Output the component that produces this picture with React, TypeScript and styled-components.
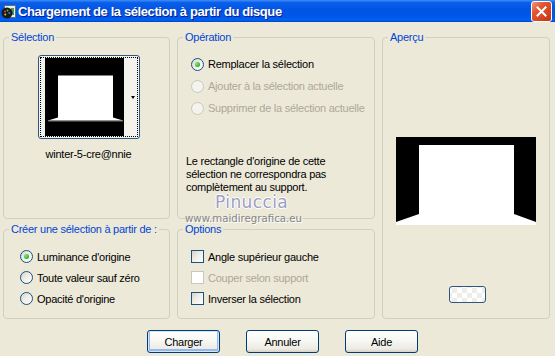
import styled, { createGlobalStyle } from 'styled-components';

const GlobalStyle = createGlobalStyle`
  html, body {
    margin: 0;
    padding: 0;
    background: #ECE9D8;
  }
`;

const Window = styled.div`
  position: relative;
  width: 555px;
  height: 356px;
  overflow: hidden;
  background: #ECE9D8;
  color: #000;
  font-family: "Liberation Sans", Arial, sans-serif;
  font-size: 11px;
  letter-spacing: -0.25px;
`;

const TitleBar = styled.div`
  height: 22px;
  display: flex;
  align-items: center;
  padding: 0 3px 0 1px;
  box-sizing: border-box;
  background: linear-gradient(to bottom, #3D8EF8 0%, #0A5EEA 12%, #0055E3 45%, #0058E8 80%, #0063F5 90%, #0046CB 100%);
`;

const TitleIcon = styled.svg`
  width: 16px;
  height: 16px;
  flex: none;
  margin-right: 1px;
`;

const TitleText = styled.div`
  color: #fff;
  font-weight: bold;
  font-size: 13px;
  letter-spacing: -0.4px;
  text-shadow: 1px 1px 0 #0A1E8C;
  white-space: nowrap;
`;

const CloseButton = styled.div`
  margin-left: auto;
  width: 21px;
  height: 21px;
  box-sizing: border-box;
  border: 1px solid #fff;
  border-radius: 3px;
  background: linear-gradient(135deg, #F0957A 0%, #E2552F 35%, #D2411F 75%, #BC3417 100%);
  display: flex;
  align-items: center;
  justify-content: center;
`;

const Content = styled.div`
  padding: 9px 0 0 3px;
`;

const Groups = styled.div`
  display: grid;
  grid-template-columns: 167px 198px 168px;
  grid-template-rows: 188px 96px;
  column-gap: 7px;
  row-gap: 4px;
`;

const Group = styled.fieldset<{ $col: string; $row: string }>`
  grid-column: ${p => p.$col};
  grid-row: ${p => p.$row};
  margin: 0;
  padding: 0;
  min-width: 0;
  min-inline-size: 0;
  box-sizing: border-box;
  height: 100%;
  border: 1px solid #D0D0BF;
  border-radius: 4px;
`;

const Legend = styled.legend`
  margin-left: 5px;
  padding: 0 2px;
  color: #0046D5;
  line-height: 13px;
  font-size: 11px;
`;

const GroupBody = styled.div<{ $pad: string; $center?: boolean }>`
  display: flex;
  flex-direction: column;
  align-items: ${p => (p.$center ? 'center' : 'flex-start')};
  padding: ${p => p.$pad};
`;

const Thumb = styled.div`
  width: 102px;
  height: 84px;
  box-sizing: border-box;
  border: 1px solid #2F5683;
  border-radius: 3px;
  padding: 1px;
  background: #F3F2EC;
`;

const Focus = styled.div`
  height: 100%;
  box-sizing: border-box;
  border: 1px dotted #000;
  display: flex;
  align-items: center;
  padding-left: 4px;
`;

const ArrowArea = styled.div`
  flex: 1;
  align-self: stretch;
  display: flex;
  align-items: center;
  justify-content: flex-end;
  padding-right: 2px;
`;

const Arrow = styled.span`
  width: 0;
  height: 0;
  border-left: 2.5px solid transparent;
  border-right: 2.5px solid transparent;
  border-top: 3px solid #000;
`;

const FileName = styled.div`
  margin-top: 9px;
  line-height: 13px;
`;

const OptionRow = styled.div<{ $h: number; $disabled?: boolean }>`
  display: flex;
  align-items: center;
  gap: 4px;
  height: ${p => p.$h}px;
  color: ${p => (p.$disabled ? '#ACA899' : '#000')};
  white-space: nowrap;
`;

const RadioMark = styled.span<{ $checked?: boolean; $disabled?: boolean }>`
  flex: none;
  width: 13px;
  height: 13px;
  box-sizing: border-box;
  border-radius: 50%;
  border: 1px solid ${p => (p.$disabled ? '#CAC8BB' : '#1C5180')};
  background: ${p =>
    p.$disabled ? '#F4F3EE' : 'linear-gradient(135deg, #D6D5CC 0%, #EEEDE6 45%, #FFFFFF 100%)'};
  display: flex;
  align-items: center;
  justify-content: center;

  &::after {
    content: '';
    display: ${p => (p.$checked ? 'block' : 'none')};
    width: 5px;
    height: 5px;
    border-radius: 50%;
    background: radial-gradient(circle at 35% 35%, #8CEB86 0%, #3FBE3B 50%, #1F9A1F 100%);
  }
`;

const CheckMark = styled.span<{ $disabled?: boolean }>`
  flex: none;
  width: 13px;
  height: 13px;
  box-sizing: border-box;
  border: 1px solid ${p => (p.$disabled ? '#CAC8BB' : '#1C5180')};
  background: ${p =>
    p.$disabled ? '#FFFFFF' : 'linear-gradient(135deg, #D6D5CC 0%, #EEEDE6 45%, #FFFFFF 100%)'};
`;

const Note = styled.p`
  margin: 36px 0 0 0;
  line-height: 13px;
`;

const Preview = styled.svg`
  width: 140px;
  height: 88px;
  display: block;
`;

const SwatchButton = styled.div`
  margin-top: 61px;
  margin-left: 3px;
  width: 37px;
  height: 17px;
  box-sizing: border-box;
  border: 1px solid #2F5683;
  border-radius: 3px;
  background-color: #FAFAF8;
  background-image: conic-gradient(#EDEDEA 25%, #FFFFFF 0 50%, #EDEDEA 0 75%, #FFFFFF 0);
  background-size: 10px 10px;
  background-position: 7px 1px;
`;

const ButtonRow = styled.div`
  display: flex;
  gap: 26px;
  margin-top: 11px;
  padding-left: 144px;
`;

const Button = styled.button<{ $default?: boolean }>`
  width: 73px;
  height: 23px;
  box-sizing: border-box;
  padding: 0;
  border: 1px solid #003C74;
  border-radius: 3px;
  background: linear-gradient(to bottom, #FFFFFF 0%, #F6F6F2 50%, #ECEBE4 85%, #D8D2C6 100%);
  color: #000;
  font: inherit;
  letter-spacing: inherit;
  box-shadow: ${p => (p.$default ? 'inset 0 0 0 1px #CEE7FF, inset 0 -1px 0 2px #98B8EA' : 'none')};
`;

const Watermark = styled.div`
  position: absolute;
  left: 185px;
  top: 194px;
  display: flex;
  flex-direction: column;
  align-items: flex-start;
  pointer-events: none;
  font-family: "DejaVu Sans", Verdana, sans-serif;
  letter-spacing: 0;
`;

const MarkName = styled.div`
  margin-left: 30px;
  font-size: 17px;
  line-height: 16px;
  letter-spacing: 0.4px;
  color: #9D9EC2;
  text-shadow: 1px 0 0 #fff, -1px 0 0 #fff, 0 1px 0 #fff, 0 -1px 0 #fff;
`;

const MarkSite = styled.div`
  margin-top: 4px;
  font-size: 10.2px;
  line-height: 9px;
  color: #858585;
  text-shadow: 1px 1px 0 #fff;
`;

export default function App() {
  return (
    <>
      <GlobalStyle />
      <Window>
        <TitleBar>
          <TitleIcon viewBox="0 0 16 16">
            <rect x="3.5" y="2.5" width="11" height="12" fill="#E6EEF6" stroke="#5A6E86" />
            <rect x="10" y="5" width="3" height="7" fill="#4E9A4A" />
            <circle cx="6" cy="10" r="5.5" fill="#1A1A1A" />
            <circle cx="4" cy="8.5" r="1" fill="#E23A3A" />
            <circle cx="6.5" cy="7.5" r="1" fill="#3AC24A" />
            <circle cx="8.3" cy="10" r="1" fill="#3A7AE2" />
            <circle cx="4.3" cy="11.5" r="1" fill="#E2C23A" />
          </TitleIcon>
          <TitleText>Chargement de la sélection à partir du disque</TitleText>
          <CloseButton>
            <svg width="11" height="11" viewBox="0 0 11 11">
              <path d="M1.5 1.5 L9.5 9.5 M9.5 1.5 L1.5 9.5" stroke="#fff" strokeWidth="2" strokeLinecap="square" />
            </svg>
          </CloseButton>
        </TitleBar>

        <Content>
          <Groups>
            <Group $col="1" $row="1">
              <Legend>Sélection</Legend>
              <GroupBody $pad="11px 0 0 4px" $center>
                <Thumb>
                  <Focus>
                    <svg width="79" height="78" viewBox="0 0 79 80" preserveAspectRatio="none">
                      <rect width="79" height="80" fill="#000" />
                      <polygon points="13,18 68,18 68,61 78,64 3,64 13,61" fill="#fff" />
                      <line x1="3" y1="64.5" x2="78" y2="64.5" stroke="#9A9A9A" strokeWidth="1" />
                    </svg>
                    <ArrowArea>
                      <Arrow />
                    </ArrowArea>
                  </Focus>
                </Thumb>
                <FileName>winter-5-cre@nnie</FileName>
              </GroupBody>
            </Group>

            <Group $col="2" $row="1">
              <Legend>Opération</Legend>
              <GroupBody $pad="9px 0 0 13px">
                <OptionRow $h={22}>
                  <RadioMark $checked />
                  Remplacer la sélection
                </OptionRow>
                <OptionRow $h={22} $disabled>
                  <RadioMark $disabled />
                  Ajouter à la sélection actuelle
                </OptionRow>
                <OptionRow $h={22} $disabled>
                  <RadioMark $disabled />
                  Supprimer de la sélection actuelle
                </OptionRow>
              </GroupBody>
              <GroupBody $pad="0 0 0 8px">
                <Note>
                  Le rectangle d'origine de cette
                  <br />
                  sélection ne correspondra pas
                  <br />
                  complètement au support.
                </Note>
              </GroupBody>
            </Group>

            <Group $col="3" $row="1 / span 2">
              <Legend>Aperçu</Legend>
              <GroupBody $pad="93px 0 0 0" $center>
                <Preview viewBox="0 0 140 88">
                  <rect width="140" height="88" fill="#000" />
                  <polygon points="23,8 118,8 118,77 140,85 140,88 0,88 0,85 23,77" fill="#fff" />
                </Preview>
                <SwatchButton />
              </GroupBody>
            </Group>

            <Group $col="1" $row="2">
              <Legend>Créer une sélection à partir de :</Legend>
              <GroupBody $pad="10px 0 0 16px">
                <OptionRow $h={21}>
                  <RadioMark $checked />
                  Luminance d'origine
                </OptionRow>
                <OptionRow $h={21}>
                  <RadioMark />
                  Toute valeur sauf zéro
                </OptionRow>
                <OptionRow $h={21}>
                  <RadioMark />
                  Opacité d'origine
                </OptionRow>
              </GroupBody>
            </Group>

            <Group $col="2" $row="2">
              <Legend>Options</Legend>
              <GroupBody $pad="10px 0 0 13px">
                <OptionRow $h={21}>
                  <CheckMark />
                  Angle supérieur gauche
                </OptionRow>
                <OptionRow $h={21} $disabled>
                  <CheckMark $disabled />
                  Couper selon support
                </OptionRow>
                <OptionRow $h={21}>
                  <CheckMark />
                  Inverser la sélection
                </OptionRow>
              </GroupBody>
            </Group>
          </Groups>

          <ButtonRow>
            <Button $default>Charger</Button>
            <Button>Annuler</Button>
            <Button>Aide</Button>
          </ButtonRow>
        </Content>

        <Watermark>
          <MarkName>Pinuccia</MarkName>
          <MarkSite>www.maidiregrafica.eu</MarkSite>
        </Watermark>
      </Window>
    </>
  );
}
